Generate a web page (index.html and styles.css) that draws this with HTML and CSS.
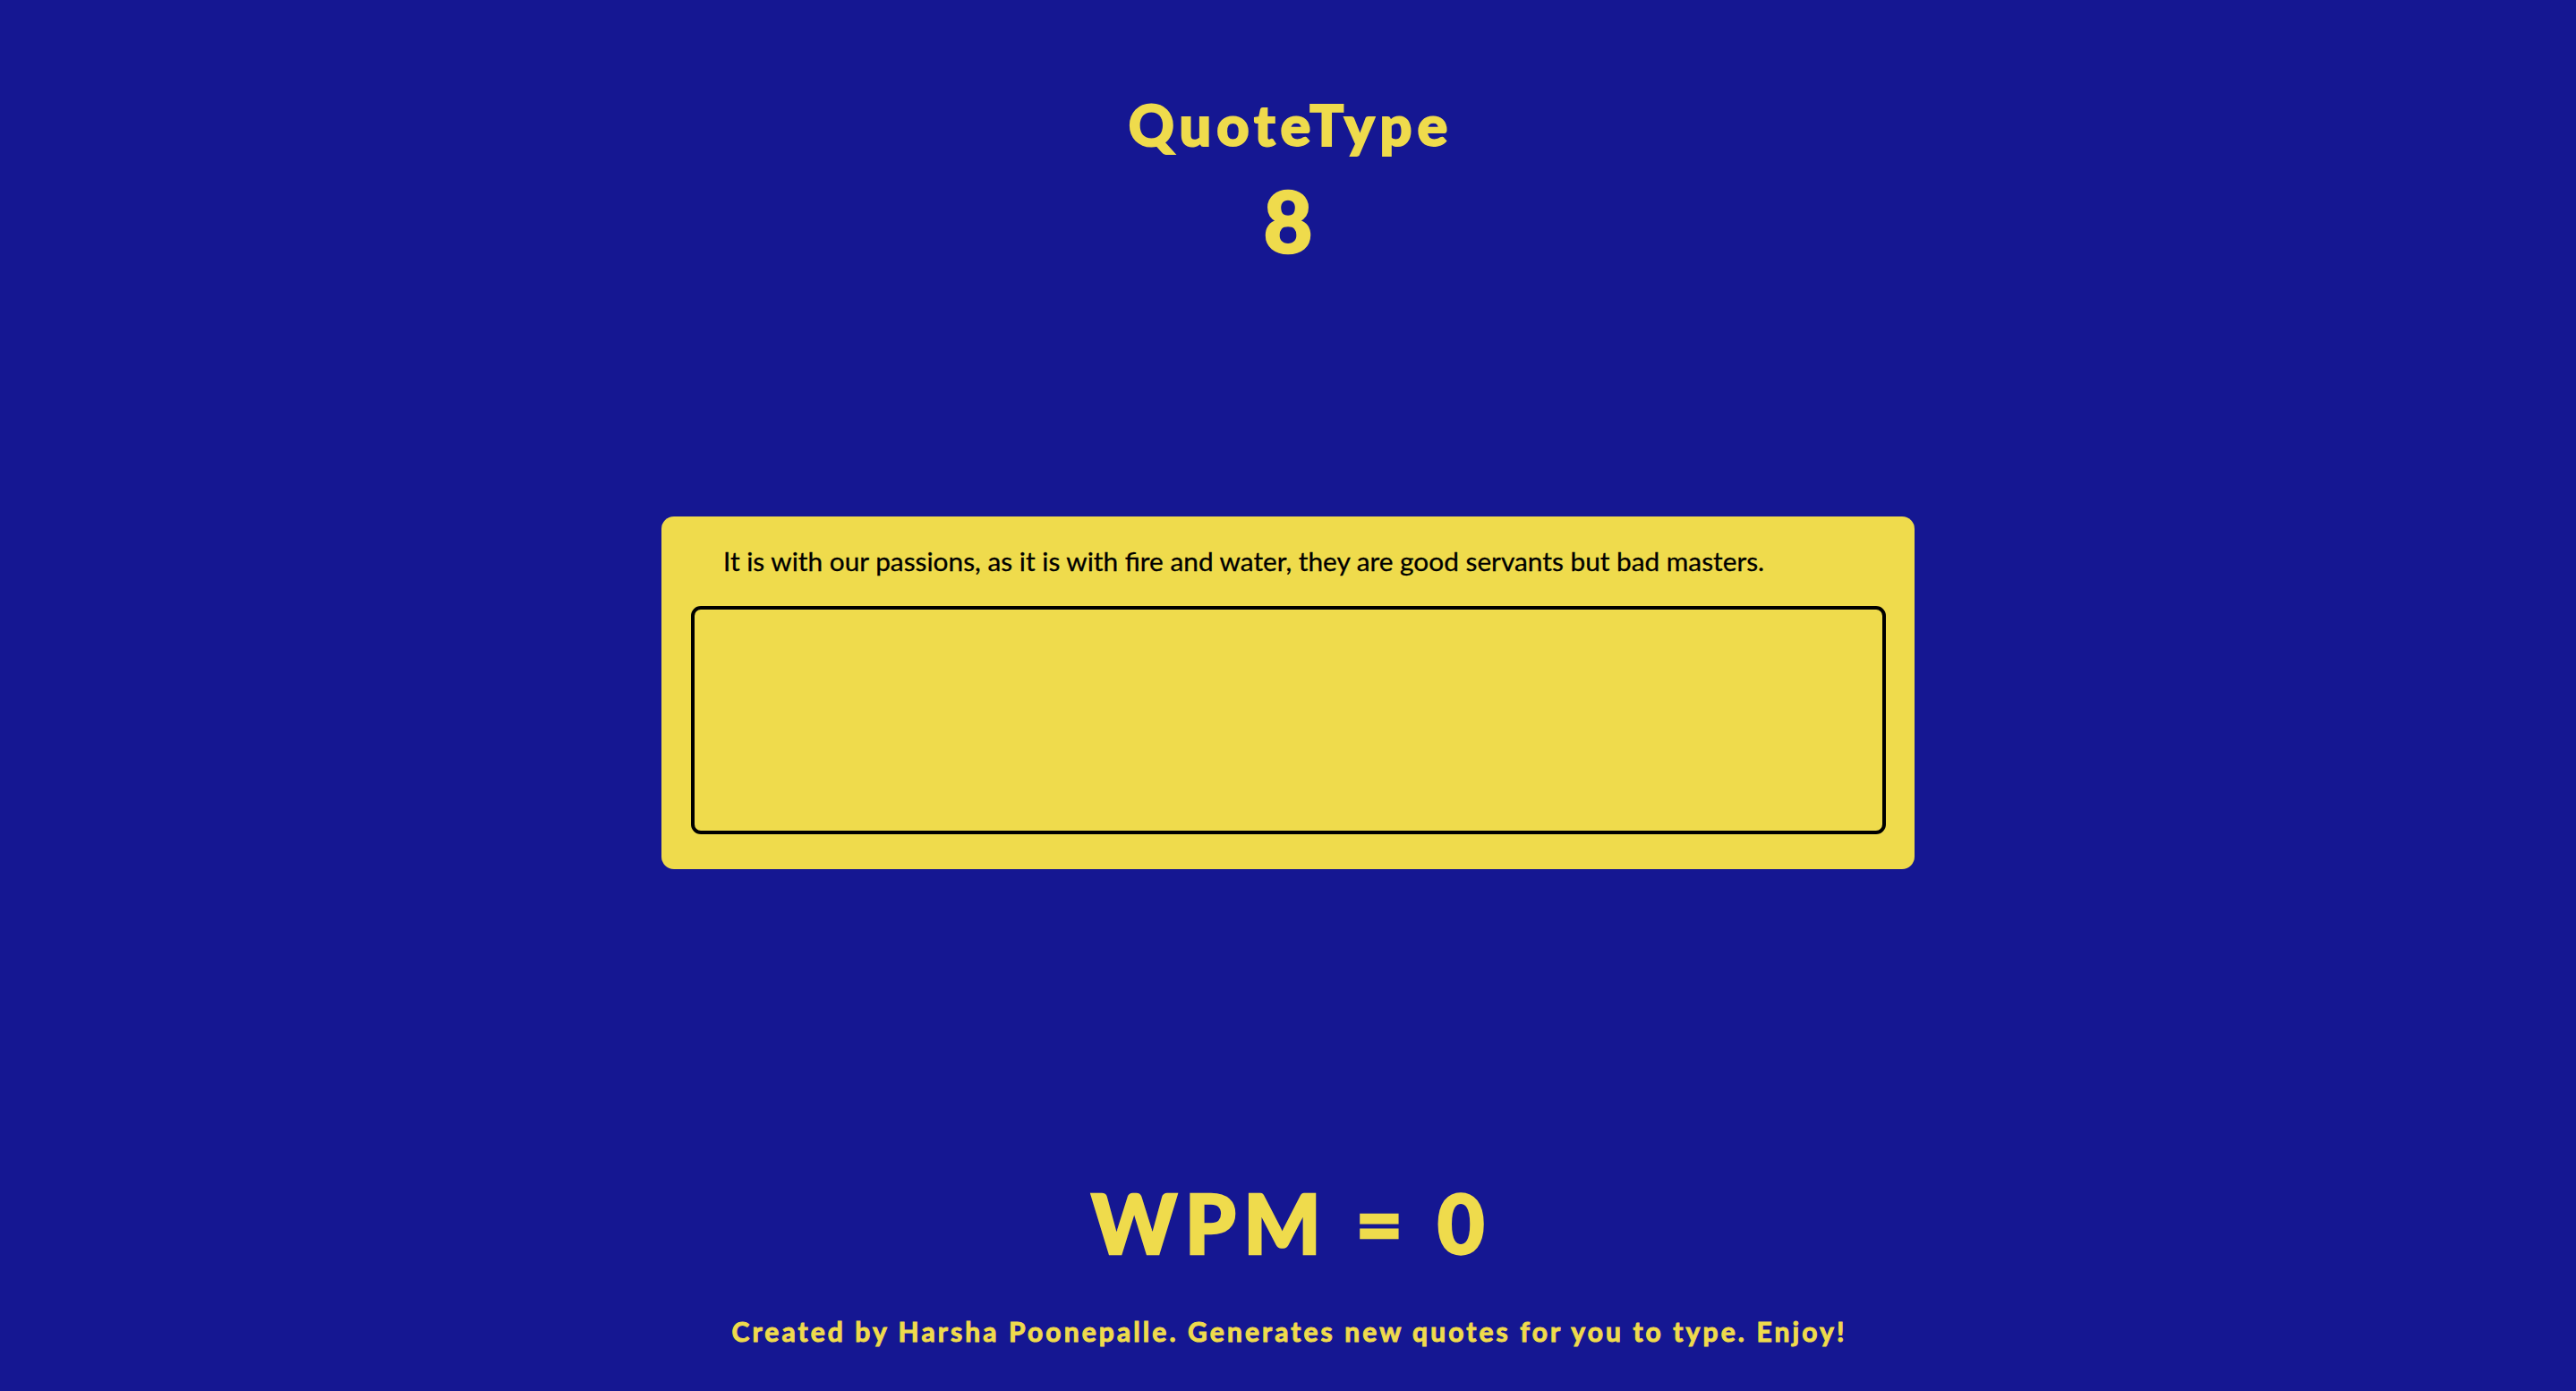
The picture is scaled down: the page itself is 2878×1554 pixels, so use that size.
FILE: index.html
```html
<!DOCTYPE html>
<html lang="en">
<head>
<meta charset="utf-8">
<title>QuoteType</title>
<link rel="stylesheet" href="styles.css">
</head>
<body>
<main class="page">
  <header class="header">
    <h1 class="title">QuoteType</h1>
    <div class="timer">8</div>
  </header>
  <section class="card">
    <p class="quote">It is with our passions, as it is with fire and water, they are good servants but bad masters.</p>
    <textarea class="input" aria-label="Type the quote"></textarea>
  </section>
  <div class="wpm">WPM = 0</div>
  <footer class="footer">Created by Harsha Poonepalle. Generates new quotes for you to type. Enjoy!</footer>
</main>
</body>
</html>
```

FILE: styles.css
```css
html, body {
  margin: 0;
  padding: 0;
  background: #151792;
}
body {
  font-family: Lato, "Open Sans", "DejaVu Sans", sans-serif;
  color: #efdb4c;
  min-height: 1554px;
}
.page {
  display: flex;
  flex-direction: column;
  align-items: center;
}
.header {
  display: flex;
  flex-direction: column;
  align-items: center;
  padding-top: 107px;
}
.title {
  margin: 0 0 0 6px;
  font-size: 63px;
  line-height: 64px;
  font-weight: 900;
  letter-spacing: 6px;
  -webkit-text-stroke: 2px #efdb4c;
}
.timer {
  margin-top: 28px;
  font-size: 94px;
  line-height: 94px;
  font-weight: 900;
  -webkit-text-stroke: 2.5px #efdb4c;
}
.card {
  margin-top: 284px;
  width: 1400px;
  height: 394px;
  box-sizing: border-box;
  background: #efdb4c;
  border-radius: 14px;
  padding: 0 32px 0 33px;
  display: flex;
  flex-direction: column;
}
.quote {
  margin: 33px 0 0 36px;
  font-size: 29.8px;
  line-height: 34px;
  color: #000;
  -webkit-text-stroke: 0.3px #000;
}
.input {
  margin-top: 33px;
  width: 1335px;
  height: 255px;
  box-sizing: border-box;
  background: transparent;
  border: 4px solid #000;
  border-radius: 11px;
  resize: none;
  font: inherit;
  outline: none;
}
.wpm {
  margin: 350px 0 0 8px;
  font-size: 91px;
  line-height: 90px;
  font-weight: 900;
  letter-spacing: 8.5px;
  -webkit-text-stroke: 2.5px #efdb4c;
}
.footer {
  margin: 58px 0 0 3px;
  font-size: 30px;
  line-height: 36px;
  font-weight: 700;
  letter-spacing: 3.1px;
  -webkit-text-stroke: 1px #efdb4c;
}
```
